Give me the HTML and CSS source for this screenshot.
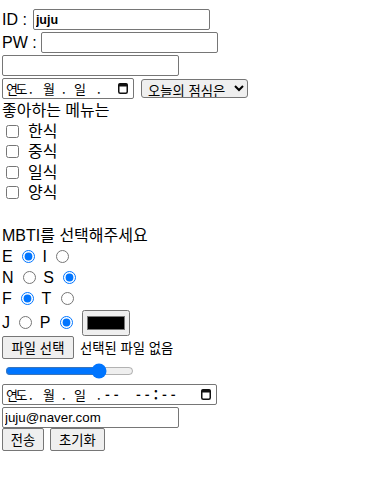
FILE: index.html
```html
<!DOCTYPE html>
<html lang="ko">
<head>
    <meta charset="UTF-8">
    <meta name="viewport" content="width=device-width, initial-scale=1.0">
    <title>회원 폼</title>
    <link rel="stylesheet" href="styles.css">
</head>
<body>
    <form class="form">
        <div class="row row-in"><span>ID :</span><input type="text" class="txt id-box" value="juju"></div>
        <div class="row row-in"><span>PW :</span><input type="password" class="txt pw-box"></div>
        <div class="row row-in"><input type="text" class="txt"></div>

        <!-- 날짜 + 점심 선택 -->
        <div class="row row-in">
            <span class="date-box">
                <span class="fld f-year">연도</span><span class="dot">.</span><span class="fld f-mon">월</span><span class="dot d2">.</span><span class="fld f-day">일</span><span class="dot">.</span>
                <svg class="cal" width="10" height="11" viewBox="0 0 10 11"><rect x="0.75" y="0.75" width="8.5" height="9.5" rx="1.5" fill="none" stroke="#111" stroke-width="1.5"/><rect x="0.5" y="0.5" width="9" height="3" rx="1" fill="#111"/></svg>
            </span>
            <select class="sel"><option>오늘의 점심은</option></select>
        </div>

        <div class="row row-lbl">좋아하는 메뉴는</div>
        <label class="row row-cb"><input type="checkbox">한식</label>
        <label class="row row-cb"><input type="checkbox">중식</label>
        <label class="row row-cb"><input type="checkbox">일식</label>
        <label class="row row-cb"><input type="checkbox">양식</label>

        <div class="row row-gap"></div>
        <div class="row row-mbti">MBTI를 선택해주세요</div>
        <div class="row row-rd">E<input type="radio" name="ei" checked>I<input type="radio" name="ei"></div>
        <div class="row row-rd">N<input type="radio" name="ns">S<input type="radio" name="ns" checked></div>
        <div class="row row-rd">F<input type="radio" name="ft" checked>T<input type="radio" name="ft"></div>
        <div class="row row-jp">J<input type="radio" name="jp">P<input type="radio" name="jp" checked><input type="color" class="col"></div>

        <!-- 파일 선택 -->
        <div class="row row-in file-row"><button type="button" class="btn file-btn">파일 선택</button><span class="file-none">선택된 파일 없음</span></div>
        <div class="row row-rng"><input type="range" class="rng" value="76"></div>

        <div class="row row-dt">
            <span class="date-box dt-box">
                <span class="fld f-year">연도</span><span class="dot">.</span><span class="fld f-mon">월</span><span class="dot d2">.</span><span class="fld f-day">일</span><span class="dot d-last">.</span><span class="dash d-hour">--</span><span class="dash">--:--</span>
                <svg class="cal" width="10" height="11" viewBox="0 0 10 11"><rect x="0.75" y="0.75" width="8.5" height="9.5" rx="1.5" fill="none" stroke="#111" stroke-width="1.5"/><rect x="0.5" y="0.5" width="9" height="3" rx="1" fill="#111"/></svg>
            </span>
        </div>
        <div class="row row-mail"><input type="email" class="txt" value="juju@naver.com"></div>
        <div class="row row-in"><input type="submit" class="btn send-btn" value="전송"><input type="reset" class="btn reset-btn" value="초기화"></div>
    </form>
</body>
</html>
```

FILE: styles.css
```css
body {
    margin: 8px 2px;
    font-family: "Liberation Sans", "Noto Sans CJK KR", sans-serif;
    font-size: 16px;
    line-height: 21px;
    color: #000;
}

input, select, button {
    font-family: "Liberation Sans", "Noto Sans CJK KR", sans-serif;
    font-size: 13.33px;
}

/* 한 줄씩 */
.row {
    display: flex;
    align-items: center;
}

.row-in { height: 23px; }
.row-lbl { height: 21px; }
.row-cb { height: 20.5px; }
.row-gap { height: 21.5px; }
.row-mbti { height: 21.5px; }
.row-rd { height: 21px; }
.row-jp { height: 27px; }
.row-rng { height: 24px; }
.row-dt { height: 23px; }
.row-mail { height: 22px; }

/* 텍스트 입력 */
.txt {
    box-sizing: border-box;
    width: 177px;
    height: 21px;
    margin: 0;
    padding: 1px 2px;
    border: 1px solid #767676;
    border-radius: 2px;
}

.id-box {
    margin-left: 6px;
    font-weight: bold;
    font-size: 12.5px;
}

.pw-box {
    margin-left: 4px;
}

/* 날짜 박스 */
.date-box {
    box-sizing: border-box;
    display: inline-flex;
    align-items: center;
    width: 132px;
    height: 21px;
    padding: 0 5px 0 3px;
    border: 1px solid #767676;
    border-radius: 2px;
    font-family: "Noto Sans CJK KR", sans-serif;
    font-size: 13px;
    line-height: 19px;
}

.dt-box {
    width: 215px;
}

.fld {
    letter-spacing: -2.5px;
}

.f-year { width: 22px; }
.f-mon { width: 18px; }
.f-day { width: 22px; }

.dot {
    width: 14px;
    padding-left: 1px;
}

.d2 {
    width: 12px;
}

.d-last {
    width: 8px;
}

.dash {
    letter-spacing: 4px;
    font-weight: bold;
}

.d-hour {
    width: 31px;
}

.cal {
    margin-left: auto;
}

.sel {
    box-sizing: border-box;
    height: 19px;
    width: 107px;
    margin-left: 7px;
    padding: 0 0 0 2px;
    border: 1px solid #767676;
    border-radius: 3px;
    font-family: "Noto Sans CJK KR", sans-serif;
    font-size: 13.33px;
    line-height: 17px;
}

.row-cb input {
    margin: 0 9px 0 4px;
}

.row-rd input,
.row-jp input[type="radio"] {
    margin: 0 7.4px 0 9.4px;
}

.col {
    width: 48px;
    height: 26px;
    margin: 0 0 0 1.5px;
}

/* 버튼 */
.btn {
    box-sizing: border-box;
    height: 23px;
    margin: 0;
    padding: 1px 6px;
    border: 1px solid #767676;
    border-radius: 2px;
    background-color: #efefef;
    color: #000;
    font-family: "Noto Sans CJK KR", sans-serif;
    font-size: 13.33px;
    line-height: 19px;
}

.send-btn {
    width: 42px;
}

.reset-btn {
    width: 55px;
    margin-left: 6px;
}

.file-row {
    font-family: "Noto Sans CJK KR", sans-serif;
    font-size: 13.33px;
}

.file-btn {
    width: 72px;
    margin-right: 6px;
}

.rng {
    width: 129px;
    margin: 0 0 0 3px;
}
```
